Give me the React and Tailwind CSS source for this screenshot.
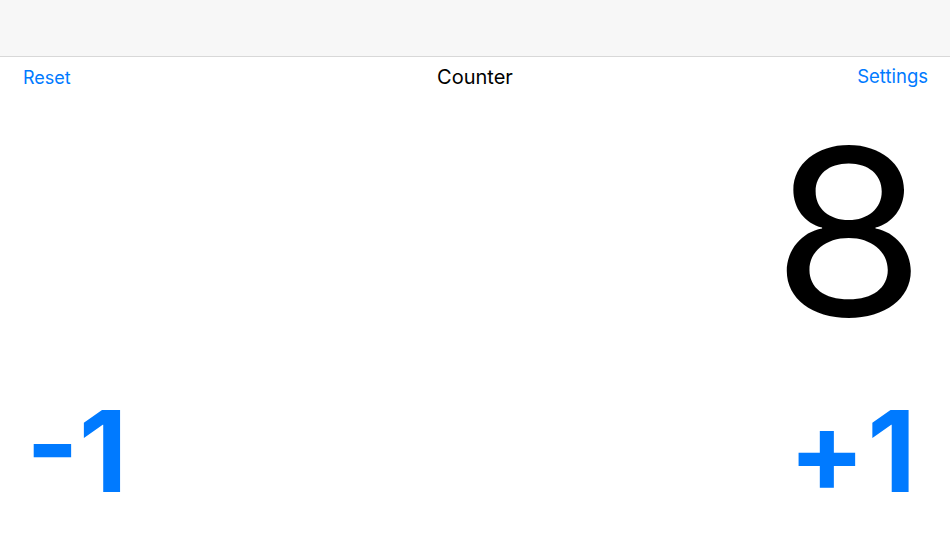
export default function App() {
  return (
    <div className="w-[950px] h-[534px] bg-white overflow-hidden flex flex-col" style={{ fontFamily: "Inter, 'Noto Sans', sans-serif" }}>
      <div className="h-[57px] bg-[#f7f7f7] border-b border-[#d8d8d8] shrink-0" />
      <div className="h-[40px] flex items-center justify-between pl-[23px] pr-[22px] text-[18px] relative">
        <span className="text-[#007aff]">Reset</span>
        <span className="absolute left-1/2 -translate-x-1/2 text-black text-[20px]">Counter</span>
        <span className="text-[#007aff] text-[18.5px]">Settings</span>
      </div>
      <div className="flex justify-end items-start pr-[24px] pt-[19px] h-[258px]">
        <span className="text-[232px] leading-none font-normal text-black inline-block origin-right scale-x-[1.07]">8</span>
      </div>
      <div className="flex justify-between items-start pl-[26px] pr-[32px] pt-[40px] flex-1">
        <span className="text-[113px] leading-none font-bold text-[#007aff]">-1</span>
        <span className="text-[113px] leading-none font-bold text-[#007aff] tracking-[2px]">+1</span>
      </div>
    </div>
  );
}
